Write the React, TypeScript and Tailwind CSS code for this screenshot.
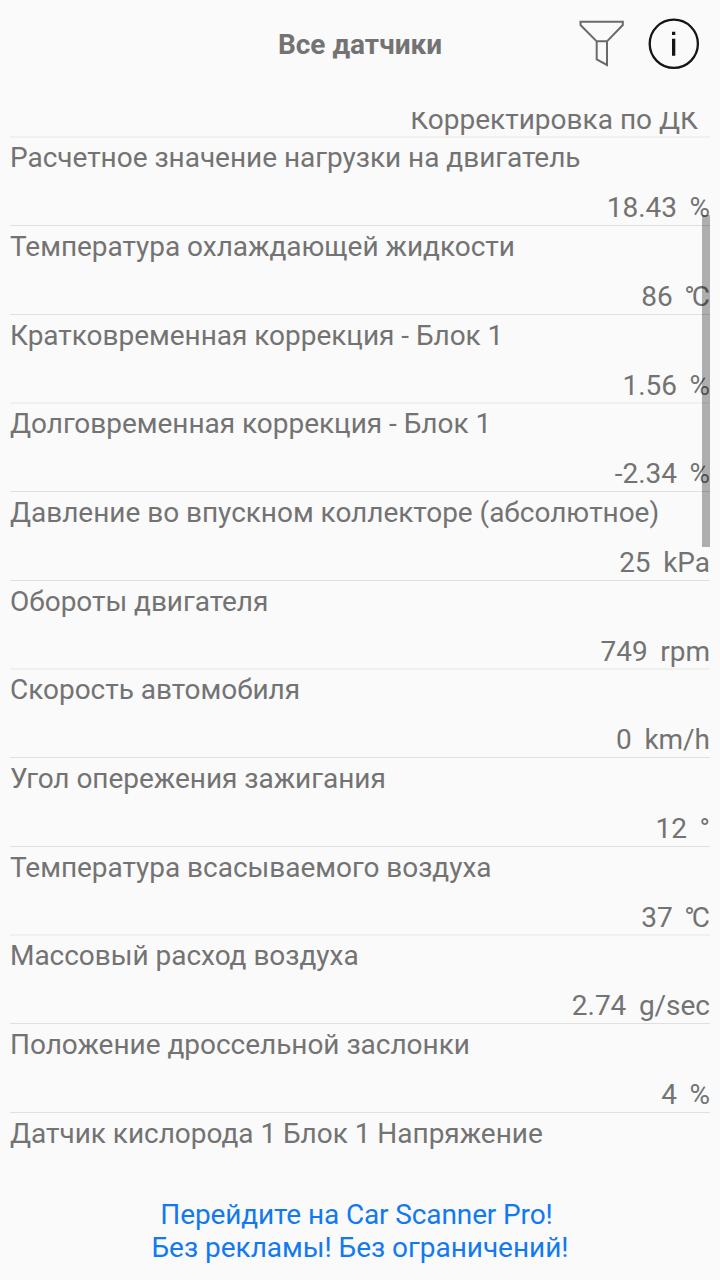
const sensors: { name: string; value: string; unit: string }[] = [
  { name: 'Расчетное значение нагрузки на двигатель', value: '18.43', unit: '%' },
  { name: 'Температура охлаждающей жидкости', value: '86', unit: '℃' },
  { name: 'Кратковременная коррекция - Блок 1', value: '1.56', unit: '%' },
  { name: 'Долговременная коррекция - Блок 1', value: '-2.34', unit: '%' },
  { name: 'Давление во впускном коллекторе (абсолютное)', value: '25', unit: 'kPa' },
  { name: 'Обороты двигателя', value: '749', unit: 'rpm' },
  { name: 'Скорость автомобиля', value: '0', unit: 'km/h' },
  { name: 'Угол опережения зажигания', value: '12', unit: '°' },
  { name: 'Температура всасываемого воздуха', value: '37', unit: '℃' },
  { name: 'Массовый расход воздуха', value: '2.74', unit: 'g/sec' },
  { name: 'Положение дроссельной заслонки', value: '4', unit: '%' },
  { name: 'Датчик кислорода 1 Блок 1 Напряжение', value: '', unit: '' },
];

// Row heights and dividers repeat every three rows.
const rowStyles = [
  'h-[88px] border-b border-[#e0e0e0] pb-px pt-[3px]',
  'h-[89px] border-b border-[#e0e0e0] pb-px pt-1',
  'h-[89px] border-b-2 border-[#f0f0f0] pt-1',
];

function Unit({ unit }: { unit: string }) {
  if (unit === '℃') {
    return (
      <span className="-ml-px">
        <span className="tracking-[-3px]">°</span>C
      </span>
    );
  }
  return <span>{unit}</span>;
}

export default function App() {
  return (
    <div className="flex h-[1280px] w-[720px] flex-col overflow-hidden bg-[#fafafa] font-[Roboto,sans-serif] text-[28px] leading-[33px] tracking-[-0.03px] text-[#737373]">
      <header className="relative flex h-[112px] shrink-0 justify-center pt-[28px]">
        <h1 className="text-[28px] font-bold tracking-normal">Все датчики</h1>
        <svg className="absolute left-[576px] top-[16px]" width="128" height="56" viewBox="0 0 128 56" fill="none">
          <path d="M4.5 5.7H46.8V9L31 25.3V49L20.7 43.5V25.3L4.5 9ZM20.7 25.3H31" stroke="#6a6a6a" strokeWidth="2" />
          <circle cx="97.8" cy="27.8" r="24.1" stroke="#151515" strokeWidth="2.3" />
          <path d="M96 15.7H99.3V19H96ZM96 22.8H99.3V39.7H96Z" fill="#151515" />
        </svg>
      </header>
      <main className="relative h-[1056px] shrink-0 overflow-hidden px-[10px]">
        <div className="flex h-[26px] items-end justify-end border-b-2 border-[#f0f0f0] pr-[12px] tracking-normal">
          Корректировка по ДК
        </div>
        {sensors.map((s, i) => (
          <div key={s.name} className={`flex flex-col justify-between ${rowStyles[i % 3]}`}>
            <div>{s.name}</div>
            <div className="flex justify-end gap-[12.6px]">
              <span>{s.value}</span>
              <Unit unit={s.unit} />
            </div>
          </div>
        ))}
        <div className="absolute right-[10px] top-[103px] h-[332px] w-[8px] bg-black/30" />
      </main>
      <footer className="pt-[30px] text-center text-[#1279f0]">
        <p className="pr-[7px] tracking-[-0.12px]">Перейдите на Car Scanner Pro!</p>
        <p>Без рекламы! Без ограничений!</p>
      </footer>
    </div>
  );
}
